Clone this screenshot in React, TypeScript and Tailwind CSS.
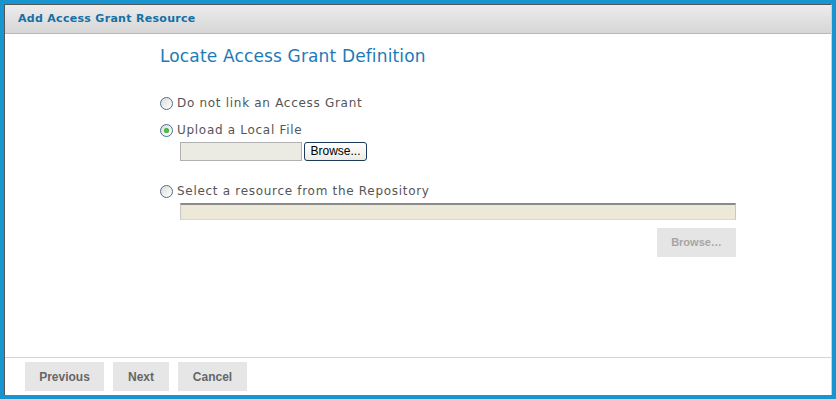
import React from "react";

function Radio({ checked }: { checked?: boolean }) {
  return (
    <span className="relative inline-flex h-[13px] w-[13px] shrink-0 items-center justify-center rounded-full border border-[#4a6f94] bg-[linear-gradient(135deg,#dcdcd7,#ffffff)]">
      {checked && (
        <span className="h-[5px] w-[5px] rounded-full bg-[radial-gradient(circle,#55d055,#1f9a1f)]" />
      )}
    </span>
  );
}

export default function App() {
  const verdana = { fontFamily: "'DejaVu Sans', Verdana, sans-serif" };
  return (
    <div className="flex h-[399px] w-[836px] flex-col bg-[#1795d0] pb-[4px] pl-[4px] pr-[4px] pt-[4px]">
      <div className="flex flex-1 flex-col border-l border-r border-t border-l-[#555] border-r-[#cfcfcf] border-t-[#555] bg-white">
        {/* header */}
        <div className="flex h-[29px] items-center border-b border-[#b8b8b8] bg-[linear-gradient(#ececec,#d6d6d6)] pl-[13px]">
          <span
            className="text-[11px] font-bold tracking-[0.3px] text-[#1470a6]"
            style={verdana}
          >
            Add Access Grant Resource
          </span>
        </div>

        {/* content */}
        <div className="flex flex-1 flex-col pl-[155px] pr-[95px]" style={verdana}>
          <div className="mt-[11px] text-[17px] leading-[22px] tracking-[0.15px] text-[#1e7ab6]">
            Locate Access Grant Definition
          </div>

          <label className="mt-[29px] flex h-[14px] items-center gap-[4px] text-[12px] tracking-[0.7px] text-[#555]">
            <Radio />
            <span>Do not link an Access Grant</span>
          </label>

          <label className="mt-[13px] flex h-[14px] items-center gap-[4px] text-[12px] tracking-[0.7px] text-[#555]">
            <Radio checked />
            <span>Upload a Local File</span>
          </label>

          <div className="ml-[20px] mt-[5px] flex items-center gap-[2px]">
            <div className="h-[19px] w-[122px] border border-[#b0b0b0] bg-[#ebebe4]" />
            <button
              className="h-[19px] w-[63px] rounded-[3px] border border-[#1c3b5c] bg-[linear-gradient(#ffffff,#ecebe6)] text-[12px] leading-[15px] text-black"
              style={{ fontFamily: "'Liberation Sans', Arial, sans-serif" }}
            >
              Browse...
            </button>
          </div>

          <label className="mt-[23px] flex h-[14px] items-center gap-[4px] text-[12px] tracking-[0.7px] text-[#555]">
            <Radio />
            <span>Select a resource from the Repository</span>
          </label>

          <div className="ml-[20px] mt-[5px] h-[17px] border-l border-r border-t-2 border-b border-l-[#c8c8c0] border-r-[#c8c8c0] border-t-[#8a8a8a] border-b-[#d8d8d0] bg-[#ece9d8]" />

          <div className="mt-[8px] flex justify-end">
            <button
              className="h-[29px] w-[79px] bg-[#e5e5e5] text-[11px] font-bold text-[#a5a5a5]"
              style={{ fontFamily: "'Liberation Sans', Arial, sans-serif" }}
            >
              Browse…
            </button>
          </div>
        </div>

        {/* footer */}
        <div
          className="flex h-[38px] items-start gap-[9px] border-t border-[#d4d4d4] pl-[20px] pt-[4px]"
          style={{ fontFamily: "'Liberation Sans', Arial, sans-serif" }}
        >
          <button className="h-[29px] w-[79px] bg-[#e6e6e6] text-[12px] font-bold text-[#666]">
            Previous
          </button>
          <button className="h-[29px] w-[56px] bg-[#e6e6e6] text-[12px] font-bold text-[#666]">
            Next
          </button>
          <button className="h-[29px] w-[69px] bg-[#e6e6e6] text-[12px] font-bold text-[#666]">
            Cancel
          </button>
        </div>
      </div>
    </div>
  );
}
